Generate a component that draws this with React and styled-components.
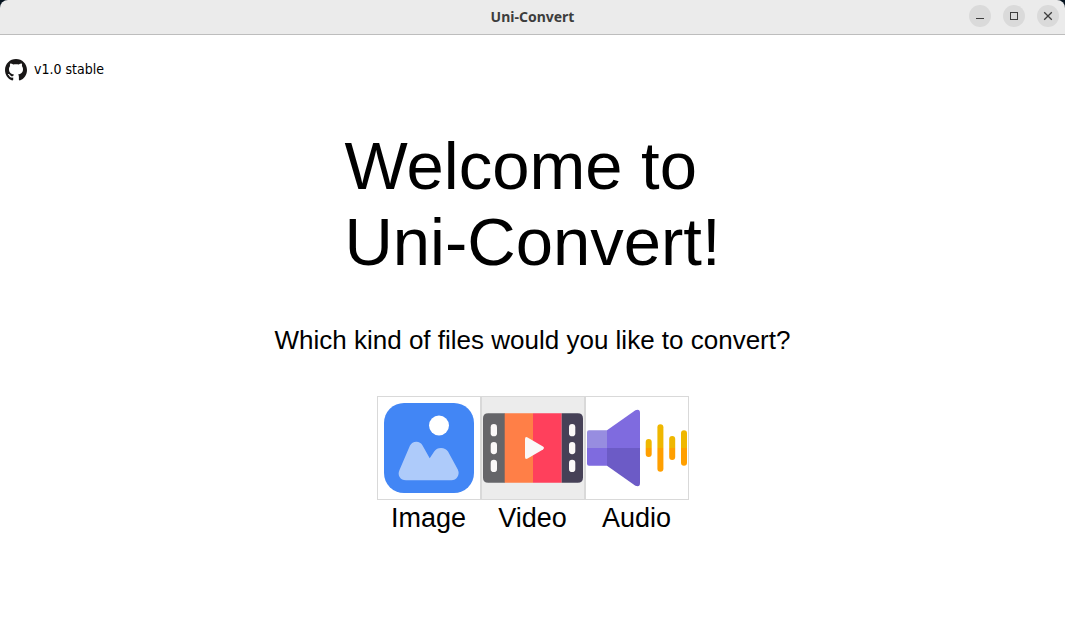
import React from "react";
import styled, { createGlobalStyle } from "styled-components";

const GlobalStyle = createGlobalStyle`
  * { box-sizing: border-box; }
  html { background: #ffffff; }
  body { margin: 0; background: #ffffff; }
`;

const Window = styled.div`
  display: flex;
  flex-direction: column;
  min-height: 100vh;
  background: #ffffff;
  color: #000000;
  font-family: "Liberation Sans", Arial, sans-serif;
`;

const Backdrop = styled.div`
  background: #05131f;
`;

const TitleBar = styled.header`
  display: grid;
  grid-template-columns: 1fr auto 1fr;
  align-items: center;
  height: 35px;
  padding: 0 6px;
  background: #ebebeb;
  border-bottom: 1px solid #bdbdbd;
  border-radius: 8px 8px 0 0;
`;

const Title = styled.span`
  grid-column: 2;
  color: #3d3d3d;
  font: bold 14px/20px "Noto Sans", sans-serif;
`;

const WindowControls = styled.div`
  display: flex;
  justify-content: flex-end;
  gap: 12px;
  padding-bottom: 2px;
`;

const ControlButton = styled.button`
  display: flex;
  width: 22px;
  height: 22px;
  padding: 0;
  border: 0;
  border-radius: 50%;
  background: #dadada;
  color: #3d3d3d;
`;

const VersionRow = styled.div`
  display: flex;
  align-items: flex-start;
  gap: 7px;
  padding: 23px 5px 0;
  font: 14px/22px "DejaVu Sans Condensed", "DejaVu Sans", sans-serif;
`;

const RepoLink = styled.a`
  display: flex;
  padding-top: 1px;
  color: #191717;
`;

const Main = styled.main`
  display: flex;
  flex-direction: column;
  align-items: center;
  padding-top: 47px;
`;

const Heading = styled.h1`
  margin: 0;
  font-size: 67px;
  font-weight: 400;
  line-height: 76px;
`;

const Question = styled.p`
  margin: 45px 0 40px;
  font-size: 26px;
  line-height: 31px;
`;

const Choices = styled.div`
  display: grid;
  grid-template-columns: repeat(3, 104px);
`;

const Choice = styled.div`
  display: flex;
  flex-direction: column;
  align-items: center;
  gap: 3px;
`;

const ChoiceButton = styled.button`
  display: flex;
  padding: 1px;
  border: 1px solid #d9d9d9;
  background: ${({ $active }) => ($active ? "#ececec" : "#ffffff")};
`;

const ChoiceLabel = styled.label`
  font-size: 27px;
  line-height: 31px;
`;

const ControlIcon = ({ children }) => (
  <svg width="22" height="22" viewBox="0 0 22 22" fill="none" stroke="currentColor" aria-hidden="true">
    {children}
  </svg>
);

const GithubIcon = () => (
  <svg width="22" height="22" viewBox="0 0 22 22" fill="currentColor" aria-hidden="true">
    <path d="M11 0C4.900 0 0 4.900 0 11C0 15.900 2.900 19.900 7.200 21.600L8.200 21V18.600C5.600 18.900 4.600 17.900 4 16.600C3.600 15.800 2.700 15.400 3 15C4 14.800 4.900 15.600 5.500 16.400C6.200 17.300 7.100 17.400 8.200 17L8.900 15.600C6.200 15.100 4 13.600 4 10.300C4 8.900 4.400 7.900 5.100 7.100C4.800 6.300 4.800 5.300 5.200 4.400C6.300 4.300 7.300 4.900 8.300 5.500C10.100 5.100 11.900 5.100 13.700 5.500C14.700 4.900 15.700 4.300 16.800 4.400C17.200 5.300 17.200 6.300 16.900 7.100C17.600 7.900 18 8.900 18 10.300C18 13.600 15.800 15.100 13.100 15.600C13.700 16.200 13.900 17 13.900 18V21L14.800 21.600C19.100 19.900 22 15.900 22 11C22 4.900 17.100 0 11 0Z" />
  </svg>
);

const ImageIcon = () => (
  <svg width="100" height="100" viewBox="0 0 100 100" aria-hidden="true">
    <rect x="5" y="5" width="90" height="90" rx="20" fill="#4286f5" />
    <circle cx="60" cy="27.5" r="10" fill="#ffffff" />
    <path
      d="M20.4 72.2 31 47.6Q33 43.7 37.3 43.7Q41.6 43.7 43.4 47.2L50.7 60.3 55.2 53.4Q57.6 50 62 50Q66.6 50 69 53.6L78.8 71.4Q80.6 75.6 78.4 79Q76.2 82.3 72.4 82.3H27Q22.6 82.3 20.6 79Q18.8 76 20.4 72.2Z"
      fill="#aecbfa"
    />
  </svg>
);

const VideoIcon = () => (
  <svg width="100" height="100" viewBox="0 0 100 100" aria-hidden="true">
    <path d="M5.300 15.200H22V84.800H5.300Q0 84.800 0 79.500V20.500Q0 15.200 5.300 15.200Z" fill="#656569" />
    <path d="M21.700 15.200H50V84.800H21.700Z" fill="#ff7f47" />
    <path d="M50 15.200H78.700V84.800H50Z" fill="#ff405c" />
    <path d="M78.700 15.200H94.700Q100 15.200 100 20.500V79.500Q100 84.800 94.700 84.800H78.700Z" fill="#464157" />
    {[26, 43.9, 61.8].map((y) => (
      <g key={y} fill="#faf8f8">
        <rect x="7.700" y={y} width="6.300" height="12.300" rx="3.150" />
        <rect x="86" y={y} width="6.300" height="12.300" rx="3.150" />
      </g>
    ))}
    <path d="M42 41Q42 38.300 44.600 39.400L60 48.600Q62 50 60 51.400L44.600 60.600Q42 61.700 42 59Z" fill="#faf8f8" />
  </svg>
);

const bars = [
  [58.7, 41, 59],
  [70.4, 26.3, 73.7],
  [82.2, 38, 62],
  [94, 32.3, 67.7],
];

const AudioIcon = () => (
  <svg width="100" height="100" viewBox="0 0 100 100" aria-hidden="true">
    <path d="M20 32.300H2Q0 32.300 0 34.300V50H20Z" fill="#978de0" />
    <path d="M0 50H20V67.700H2Q0 67.700 0 65.700Z" fill="#7f6bdf" />
    <path d="M20 32.300 48.400 12.200Q53 10.600 53 15V50H20Z" fill="#7f6bdf" />
    <path d="M20 67.700 48.400 87.800Q53 89.400 53 85V50H20Z" fill="#6c5bc6" />
    {bars.map(([x, top, bottom]) => (
      <g key={x}>
        <path d={`M${x} 50V${top + 3}a3 3 0 0 1 6 0V50Z`} fill="#efb700" />
        <path d={`M${x} 50V${bottom - 3}a3 3 0 0 0 6 0V50Z`} fill="#ff9f00" />
      </g>
    ))}
  </svg>
);

const choices = [
  { id: "image", label: "Image", Icon: ImageIcon },
  { id: "video", label: "Video", Icon: VideoIcon, active: true },
  { id: "audio", label: "Audio", Icon: AudioIcon },
];

export default function App() {
  return (
    <Window>
      <GlobalStyle />
      <Backdrop>
        <TitleBar>
          <Title>Uni-Convert</Title>
          <WindowControls>
            <ControlButton type="button" aria-label="Minimize">
              <ControlIcon>
                <path d="M7 13.500H15" />
              </ControlIcon>
            </ControlButton>
            <ControlButton type="button" aria-label="Maximize">
              <ControlIcon>
                <rect x="7.500" y="7.500" width="7" height="7" />
              </ControlIcon>
            </ControlButton>
            <ControlButton type="button" aria-label="Close">
              <ControlIcon>
                <path d="M7.200 7.200 14.800 14.800M14.800 7.200 7.200 14.800" strokeWidth="1.300" />
              </ControlIcon>
            </ControlButton>
          </WindowControls>
        </TitleBar>
      </Backdrop>
      <VersionRow>
        <RepoLink href="#" aria-label="GitHub">
          <GithubIcon />
        </RepoLink>
        <span>v1.0 stable</span>
      </VersionRow>
      <Main>
        <Heading>
          Welcome to
          <br />
          Uni-Convert!
        </Heading>
        <Question>Which kind of files would you like to convert?</Question>
        <Choices>
          {choices.map(({ id, label, Icon, active }) => (
            <Choice key={id}>
              <ChoiceButton id={id} type="button" $active={active}>
                <Icon />
              </ChoiceButton>
              <ChoiceLabel htmlFor={id}>{label}</ChoiceLabel>
            </Choice>
          ))}
        </Choices>
      </Main>
    </Window>
  );
}
